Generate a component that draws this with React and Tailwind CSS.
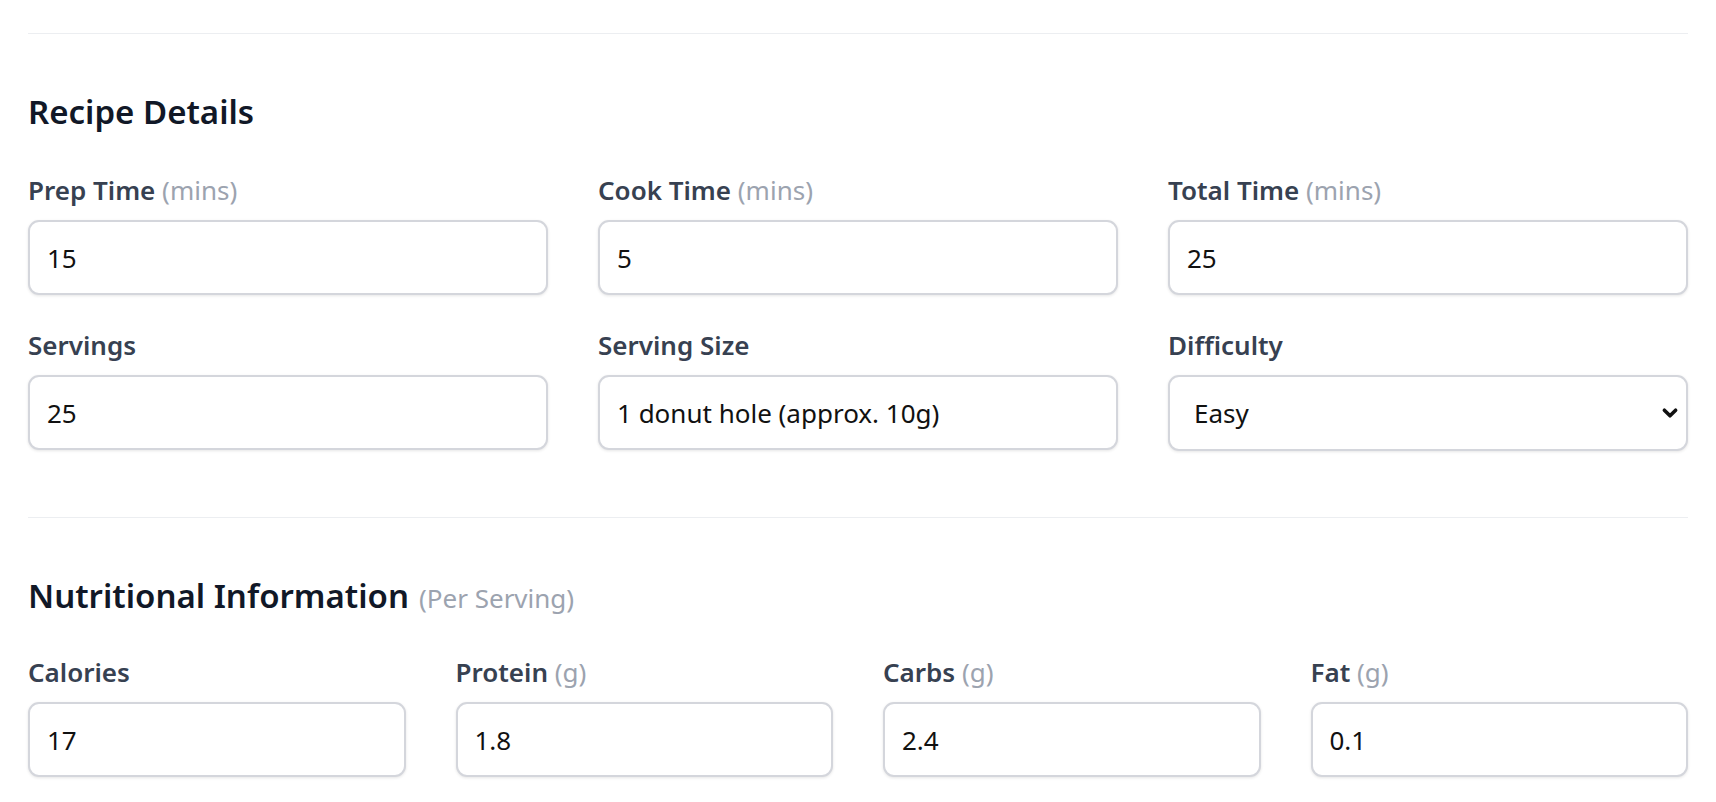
import React, { useState } from 'react';

const font = { fontFamily: '"Noto Sans", "Open Sans", sans-serif' };

function Field({ label, unit, value, onChange }) {
  return (
    <div className="flex flex-col">
      <label className="mb-3 text-[26px] leading-[36px] font-semibold text-[#374151]">
        {label}
        {unit && <span className="font-normal text-[#9ca3af]"> ({unit})</span>}
      </label>
      <input
        type="text"
        value={value}
        onChange={(e) => onChange(e.target.value)}
        className="h-[75px] w-full rounded-[11px] border-2 border-[#d4d6dc] bg-white px-[17px] text-[26px] text-[#111111] shadow-[0_1px_3px_rgba(0,0,0,0.1)] outline-none"
      />
    </div>
  );
}

function SelectField({ label, value, options, onChange }) {
  return (
    <div className="flex flex-col">
      <label className="mb-3 text-[26px] leading-[36px] font-semibold text-[#374151]">{label}</label>
      <div className="relative">
        <select
          value={value}
          onChange={(e) => onChange(e.target.value)}
          className="h-[76px] w-full appearance-none rounded-[11px] border-2 border-[#d4d6dc] bg-white pl-[24px] pr-12 text-[26px] text-[#111111] shadow-[0_1px_3px_rgba(0,0,0,0.1)] outline-none"
        >
          {options.map((o) => (
            <option key={o}>{o}</option>
          ))}
        </select>
        <svg
          className="pointer-events-none absolute right-[9px] top-1/2 h-[18px] w-[18px] -translate-y-1/2"
          viewBox="0 0 16 16"
          fill="none"
          stroke="#111"
          strokeWidth="3.2"
          strokeLinecap="round"
          strokeLinejoin="round"
        >
          <path d="M3 5.5l5 5 5-5" />
        </svg>
      </div>
    </div>
  );
}

export default function App() {
  const [recipe, setRecipe] = useState({
    prep: '15',
    cook: '5',
    total: '25',
    servings: '25',
    servingSize: '1 donut hole (approx. 10g)',
    difficulty: 'Easy',
  });
  const [nutrition, setNutrition] = useState({ calories: '17', protein: '1.8', carbs: '2.4', fat: '0.1' });

  const setR = (k) => (v) => setRecipe({ ...recipe, [k]: v });
  const setN = (k) => (v) => setNutrition({ ...nutrition, [k]: v });

  return (
    <div className="min-h-screen bg-white px-[28px]" style={font}>
      <div className="border-t-[1.5px] border-[#eceef1] mt-[33px]" />

      <section className="pt-[54px] pb-[66px]">
        <h2 className="mb-[36px] text-[33px] leading-[48px] font-semibold text-[#111827]">Recipe Details</h2>
        <div className="grid grid-cols-3 gap-x-[50px] gap-y-[32px]">
          <Field label="Prep Time" unit="mins" value={recipe.prep} onChange={setR('prep')} />
          <Field label="Cook Time" unit="mins" value={recipe.cook} onChange={setR('cook')} />
          <Field label="Total Time" unit="mins" value={recipe.total} onChange={setR('total')} />
          <Field label="Servings" value={recipe.servings} onChange={setR('servings')} />
          <Field label="Serving Size" value={recipe.servingSize} onChange={setR('servingSize')} />
          <SelectField
            label="Difficulty"
            value={recipe.difficulty}
            options={['Easy', 'Medium', 'Hard']}
            onChange={setR('difficulty')}
          />
        </div>
      </section>

      <div className="border-t-[1.5px] border-[#eceef1]" />

      <section className="pt-[54px] pb-12">
        <h2 className="mb-[32px] flex items-baseline gap-[10px] text-[33px] leading-[48px] font-semibold text-[#111827]">
          Nutritional Information
          <span className="text-[26px] font-normal text-[#9ca3af]">(Per Serving)</span>
        </h2>
        <div className="grid grid-cols-4 gap-x-[50px]">
          <Field label="Calories" value={nutrition.calories} onChange={setN('calories')} />
          <Field label="Protein" unit="g" value={nutrition.protein} onChange={setN('protein')} />
          <Field label="Carbs" unit="g" value={nutrition.carbs} onChange={setN('carbs')} />
          <Field label="Fat" unit="g" value={nutrition.fat} onChange={setN('fat')} />
        </div>
      </section>
    </div>
  );
}
